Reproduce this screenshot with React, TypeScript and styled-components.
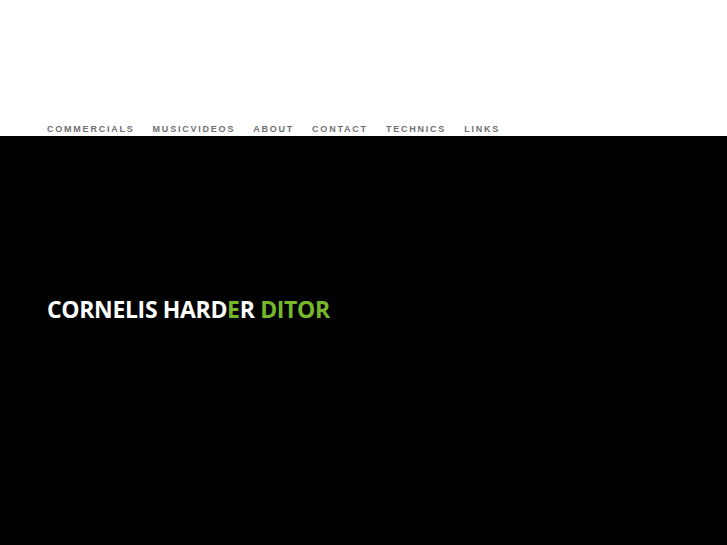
import React from "react";
import styled, { createGlobalStyle } from "styled-components";

const GlobalStyle = createGlobalStyle`
  html, body {
    margin: 0;
    padding: 0;
    background: #000000;
  }
  #root {
    min-height: 100vh;
  }
`;

const navItems = ["COMMERCIALS", "MUSICVIDEOS", "ABOUT", "CONTACT", "TECHNICS", "LINKS"];

function App() {
  return (
    <>
      <GlobalStyle />
      <Page>
        <Header>
          <Nav>
            {navItems.map((item) => (
              <NavLink key={item} href="#">
                {item}
              </NavLink>
            ))}
          </Nav>
        </Header>
        <Stage>
          <Title>
            CORNELIS HARD<Accent>E</Accent>R <Accent>DITOR</Accent>
          </Title>
        </Stage>
      </Page>
    </>
  );
}

export default App;

const Page = styled.div`
  display: flex;
  flex-direction: column;
  min-height: 100vh;
`;

const Header = styled.header`
  height: 136px;
  background: #ffffff;
  display: flex;
  align-items: flex-end;
  box-sizing: border-box;
  padding: 0 0 1px 47px;
`;

const Nav = styled.nav`
  display: flex;
  gap: 18px;
`;

const NavLink = styled.a`
  font-family: "Liberation Sans", Arial, sans-serif;
  font-size: 9px;
  font-weight: 700;
  letter-spacing: 1.78px;
  color: #707070;
  text-decoration: none;
  line-height: 11px;
`;

const Stage = styled.main`
  flex: 1;
  background: #000000;
  padding: 158px 0 0 47px;
`;

const Title = styled.h1`
  margin: 0;
  font-family: "Open Sans", sans-serif;
  font-size: 23px;
  font-weight: 700;
  letter-spacing: -0.35px;
  line-height: 30px;
  color: #ffffff;
`;

const Accent = styled.span`
  color: #76b82a;
`;
